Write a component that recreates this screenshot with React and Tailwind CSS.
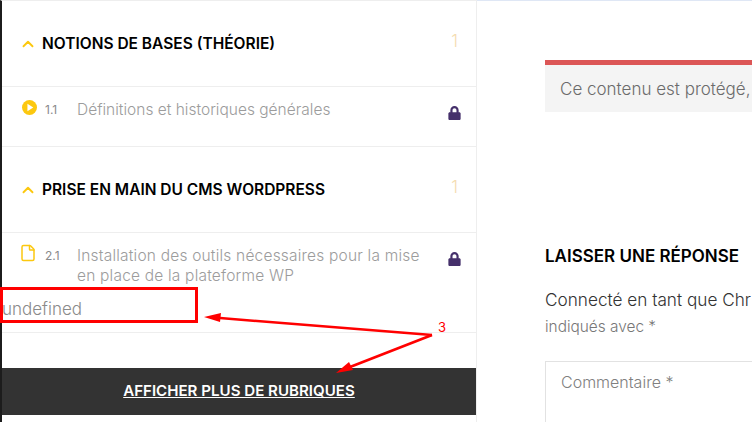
import React from "react";
import { ChevronUp, File } from "lucide-react";
import { FaLock } from "react-icons/fa";

function PlayIcon() {
  return (
    <svg viewBox="0 0 16 16" className="h-[15px] w-[15px] shrink-0">
      <circle cx="8" cy="8" r="8" fill="#fcc80f" />
      <path d="M5.8 4 L12 8 L5.8 12 Z" fill="#fff" />
    </svg>
  );
}

function SectionHeader({ title }) {
  return (
    <div className="flex h-[86px] items-center border-b border-[#eee] pl-[17px] pr-[18px]">
      <ChevronUp className="h-[18px] w-[18px] shrink-0 text-[#fcc80f]" strokeWidth={2.5} />
      <h3 className="ml-[5px] flex-1 text-[15.5px] font-semibold text-black">{title}</h3>
      <span className="mb-[4px] text-[17px] font-light text-[#f4dcb0]">1</span>
    </div>
  );
}

function Lesson({ icon, num, children, height }) {
  return (
    <div className={`flex border-b border-[#eee] pl-[20px] pr-[15px] pt-[13px] ${height}`}>
      <div className="w-[23px] shrink-0">{icon}</div>
      <span className="mt-[1px] w-[32px] shrink-0 text-[12px] text-[#8a8a8a]">{num}</span>
      <div className="flex-1 text-[15.5px] font-light leading-[20px] text-[#9c9c9c]">{children}</div>
      <FaLock className="mt-[6px] h-[14px] w-[13px] shrink-0 text-[#45306b]" />
    </div>
  );
}

export default function App() {
  return (
    <div className="relative flex h-[422px] w-[752px] overflow-hidden bg-white font-['Inter',sans-serif]">
      <aside className="flex h-full w-[477px] shrink-0 flex-col border-r border-[#eee] border-l-2 border-l-[#1c1c1c] border-t border-t-[#eee]">
        <SectionHeader title="NOTIONS DE BASES (THÉORIE)" />
        <Lesson icon={<PlayIcon />} num="1.1" height="h-[60px]">
          Définitions et historiques générales
        </Lesson>
        <SectionHeader title="PRISE EN MAIN DU CMS WORDPRESS" />
        <Lesson
          icon={<File className="-mt-[2px] -ml-[3px] h-[18px] w-[18px] text-[#fcc80f]" strokeWidth={2} />}
          num="2.1"
          height="h-[100px]"
        >
          <p className="whitespace-nowrap tracking-[0.2px]">
            Installation des outils nécessaires pour la mise
            <br />
            en place de la plateforme WP
          </p>
          <p className="-ml-[75px] mt-[13px] text-[17px] text-[#8a8a8a]">undefined</p>
        </Lesson>
        <div className="mt-[35px] flex h-[47px] items-center justify-center bg-[#333] text-[15.1px] font-semibold text-white underline">
          AFFICHER PLUS DE RUBRIQUES
        </div>
      </aside>

      <main className="min-w-0 flex-1 border-t border-t-[#dfe7f5] pl-[68px]">
        <div className="-mr-[60px] mt-[59px] h-[52px] border-t-[5px] border-[#dc5656] bg-[#f4f4f4] pl-[15px] pt-[12px] text-[17px] font-light whitespace-nowrap text-[#6b6b6b]">
          Ce contenu est protégé,
        </div>
        <h2 className="mt-[132px] text-[17px] font-semibold whitespace-nowrap text-black">LAISSER UNE RÉPONSE</h2>
        <p className="mt-[17px] w-[300px] font-light leading-[26px] text-[#333]">
          <span className="whitespace-nowrap text-[17.2px]">Connecté en tant que Chr</span>
          <br />
          <span className="text-[15.4px] text-[#777]">indiqués avec *</span>
        </p>
        <div className="-mr-[60px] mt-[21px] h-[80px] border border-[#e2e2e2] pl-[15px] pt-[8px] text-[16px] font-light text-[#808080]">
          Commentaire *
        </div>
      </main>

      {/* annotation drawn over the screenshot */}
      <div className="absolute left-0 top-[287px] h-[36px] w-[198px] border-[3px] border-[#f00]" />
      <svg className="absolute inset-0 h-full w-full" viewBox="0 0 752 422">
        <path d="M432 335 L220 318" stroke="#f00" strokeWidth="2.5" fill="none" />
        <path d="M204 317 L221 313 L220 322 Z" fill="#f00" />
        <path d="M432 335 L350 367" stroke="#f00" strokeWidth="2.5" fill="none" />
        <path d="M336 373 L349 362 L353 370 Z" fill="#f00" />
      </svg>
      <span className="absolute left-[438px] top-[319px] text-[13px] leading-[16px] text-[#f00]">3</span>
    </div>
  );
}
